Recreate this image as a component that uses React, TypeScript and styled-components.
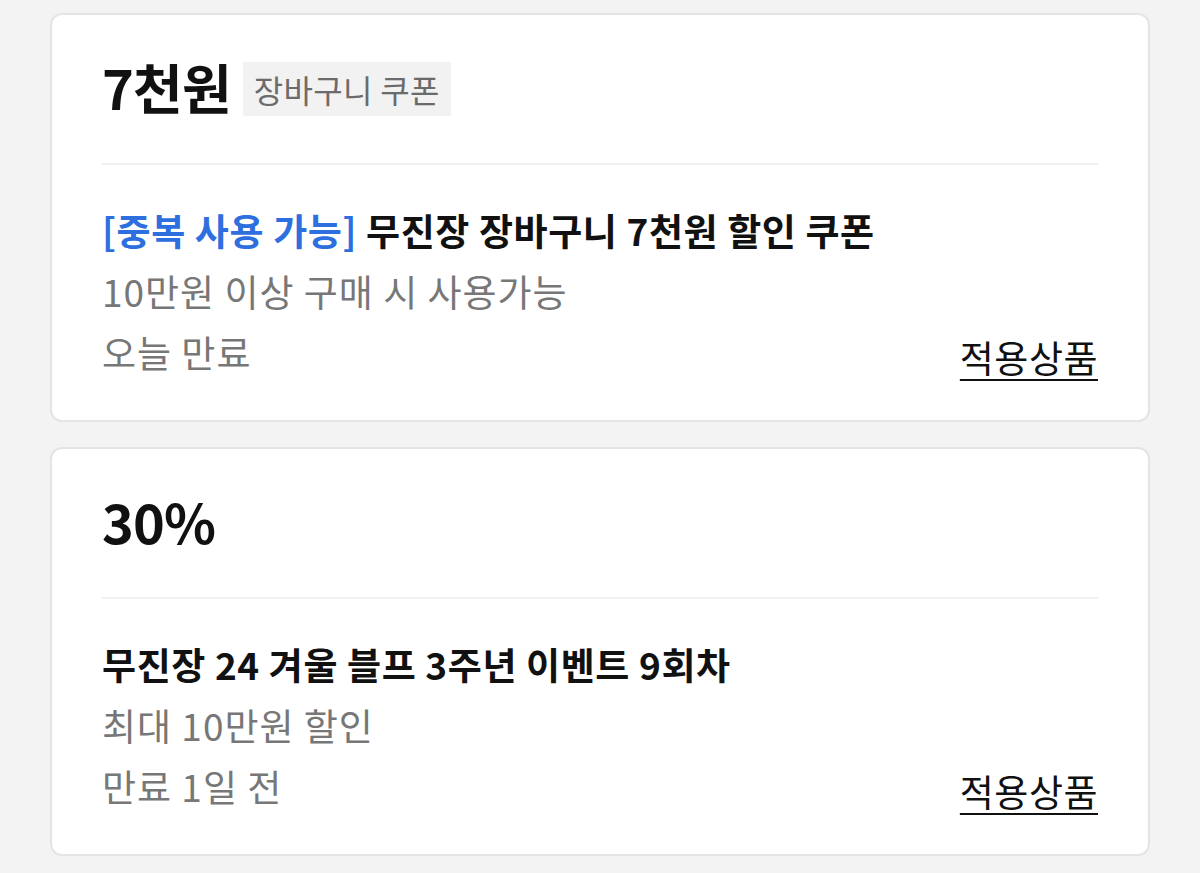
import React from "react";
import styled, { createGlobalStyle } from "styled-components";

const GlobalStyle = createGlobalStyle`
  html, body {
    margin: 0;
    padding: 0;
    background: #f3f3f3;
  }
  body {
    font-family: "Noto Sans CJK KR", "Noto Sans", sans-serif;
    -webkit-font-smoothing: antialiased;
  }
`;

const Page = styled.div`
  display: flex;
  flex-direction: column;
  gap: 25px;
  padding: 13px 50px 20px;
`;

const Card = styled.section`
  background: #ffffff;
  border: 2px solid #e4e4e4;
  border-radius: 12px;
  padding: 0 50px;
`;

const Header = styled.div`
  height: 150px;
  display: flex;
  align-items: center;
  gap: 12px;
  border-bottom: 2px solid #f0f0f0;
  box-sizing: border-box;
`;

const Amount = styled.span`
  font-size: 54px;
  font-weight: 700;
  color: #111;
  letter-spacing: -0.8px;
  line-height: 1;
  transform: translateY(-2px);
`;

const Tag = styled.span`
  display: inline-flex;
  align-items: center;
  height: 54px;
  padding: 0 11px;
  background: #f2f2f2;
  color: #6b6b6b;
  font-size: 32px;
  letter-spacing: 0.3px;
`;

const Body = styled.div`
  padding: 34px 0 38px;
  display: flex;
  flex-direction: column;
`;

const Line = styled.div<{ $tone?: "title" | "sub" }>`
  height: 61px;
  display: flex;
  align-items: center;
  font-size: 37px;
  letter-spacing: ${(p) => (p.$tone === "title" ? "0.6px" : "1px")};
  font-weight: ${(p) => (p.$tone === "title" ? 700 : 400)};
  color: ${(p) => (p.$tone === "title" ? "#111" : "#777")};
  white-space: pre;
`;

const Highlight = styled.span`
  color: #2e6fe0;
`;

const LastRow = styled.div`
  display: flex;
  justify-content: space-between;
  align-items: center;
`;

const Link = styled.a`
  font-size: 37px;
  color: #111;
  text-decoration: underline;
  text-underline-offset: 6px;
  text-decoration-thickness: 2px;
  letter-spacing: 0.5px;
  transform: translateY(5px);
  cursor: pointer;
`;

type Coupon = {
  amount: string;
  tag?: string;
  badge?: string;
  title: string;
  condition: string;
  expiry: string;
};

const coupons: Coupon[] = [
  {
    amount: "7천원",
    tag: "장바구니 쿠폰",
    badge: "[중복 사용 가능]",
    title: "무진장 장바구니 7천원 할인 쿠폰",
    condition: "10만원 이상 구매 시 사용가능",
    expiry: "오늘 만료",
  },
  {
    amount: "30%",
    title: "무진장 24 겨울 블프 3주년 이벤트 9회차",
    condition: "최대 10만원 할인",
    expiry: "만료 1일 전",
  },
];

export default function App() {
  return (
    <>
      <GlobalStyle />
      <Page>
        {coupons.map((c, i) => (
          <Card key={i}>
            <Header>
              <Amount>{c.amount}</Amount>
              {c.tag && <Tag>{c.tag}</Tag>}
            </Header>
            <Body>
              <Line $tone="title">
                {c.badge && <Highlight>{c.badge} </Highlight>}
                {c.title}
              </Line>
              <Line $tone="sub">{c.condition}</Line>
              <LastRow>
                <Line $tone="sub">{c.expiry}</Line>
                <Link>적용상품</Link>
              </LastRow>
            </Body>
          </Card>
        ))}
      </Page>
    </>
  );
}
